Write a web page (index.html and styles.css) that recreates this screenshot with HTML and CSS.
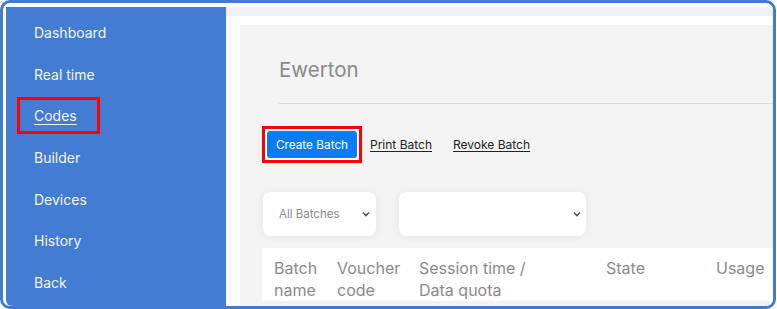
FILE: index.html
```html
<!DOCTYPE html>
<html lang="en">
<head>
  <meta charset="UTF-8">
  <meta name="viewport" content="width=device-width, initial-scale=1.0">
  <title>Codes</title>
  <link rel="stylesheet" href="styles.css">
</head>
<body>
  <div class="frame">
    <aside class="sidebar">
      <nav class="nav">
        <a class="nav-item" href="#">Dashboard</a>
        <a class="nav-item" href="#">Real time</a>
        <div class="nav-item"><a class="nav-link marked" href="#">Codes</a></div>
        <a class="nav-item" href="#">Builder</a>
        <a class="nav-item" href="#">Devices</a>
        <a class="nav-item" href="#">History</a>
        <a class="nav-item" href="#">Back</a>
      </nav>
    </aside>
    <main class="main">
      <div class="topbar"></div>
      <div class="content">
        <section class="panel">
          <div class="panel-head">
            <h1 class="title">Ewerton</h1>
          </div>
          <div class="actions">
            <span class="marked-box"><button class="btn" type="button">Create Batch</button></span>
            <a class="action-link first" href="#">Print Batch</a>
            <a class="action-link" href="#">Revoke Batch</a>
          </div>
          <div class="filters">
            <div class="select small">
              <span>All Batches</span>
              <svg width="8" height="6" viewBox="0 0 8 6"><path d="M1 1.5 L4 4.5 L7 1.5" fill="none" stroke="#555" stroke-width="1.6"/></svg>
            </div>
            <div class="select wide">
              <span></span>
              <svg width="8" height="6" viewBox="0 0 8 6"><path d="M1 1.5 L4 4.5 L7 1.5" fill="none" stroke="#555" stroke-width="1.6"/></svg>
            </div>
          </div>
          <div class="table">
            <div class="th">Batch<br>name</div>
            <div class="th">Voucher<br>code</div>
            <div class="th">Session time /<br>Data quota</div>
            <div class="th">State</div>
            <div class="th">Usage</div>
          </div>
        </section>
      </div>
    </main>
  </div>
</body>
</html>
```

FILE: styles.css
```css
body {
  margin: 0;
  font-family: Inter, "Noto Sans", sans-serif;
  background: #fff;
}
.frame {
  width: 776px;
  height: 309px;
  box-sizing: border-box;
  border: 3px solid #3f7ad3;
  border-radius: 10px;
  padding: 4px 0 0 3px;
  display: flex;
  overflow: hidden;
  background: #fff;
}
.sidebar {
  width: 220px;
  flex-shrink: 0;
  background: #437cd2;
  border-bottom-left-radius: 6px;
}
.nav {
  padding-top: 5px;
}
.nav-item {
  display: block;
  height: 41.7px;
  line-height: 41.7px;
  padding-left: 28px;
  color: #f2f6fc;
  font-size: 14px;
  text-decoration: none;
}
.nav-link {
  color: #f2f6fc;
}
.nav-link.marked {
  display: inline-block;
  margin-left: -17px;
  padding: 0 20px 0 14px;
  line-height: 31px;
  border: 3px solid #f00;
  text-decoration: underline;
  text-underline-offset: 3px;
}
.main {
  flex: 1;
  display: flex;
  flex-direction: column;
  min-width: 0;
}
.topbar {
  height: 9px;
  background: #eef0f3;
}
.content {
  flex: 1;
  padding: 9px 0 0 14px;
  display: flex;
}
.panel {
  flex: 1;
  background: #f3f3f3;
  padding-left: 22px;
}
.panel-head {
  margin-left: 17px;
  border-bottom: 1px solid #dadada;
  padding-top: 32px;
  height: 46px;
}
.title {
  margin: 0;
  font-size: 20.5px;
  line-height: 26px;
  font-weight: 400;
  color: #8a8a8a;
}
.actions {
  display: flex;
  align-items: center;
  margin-top: 22px;
}
.marked-box {
  display: inline-block;
  border: 3px solid #f00;
  padding: 2px;
  background: #fff;
  line-height: 0;
}
.btn {
  width: 90px;
  height: 27px;
  border: none;
  border-radius: 3px;
  background: #0b7cf8;
  color: #fff;
  font-family: inherit;
  font-size: 11.8px;
  padding: 0;
}
.action-link {
  margin-left: 21px;
  color: #222;
  font-size: 12px;
  text-decoration: underline;
  text-underline-offset: 2px;
}
.action-link.first {
  margin-left: 8px;
}
.filters {
  display: flex;
  gap: 23px;
  margin-top: 29px;
  padding-left: 1px;
}
.select {
  height: 44px;
  box-sizing: border-box;
  background: #fff;
  border-radius: 8px;
  box-shadow: 0 1px 8px rgba(0, 0, 0, 0.06);
  display: flex;
  align-items: center;
  justify-content: space-between;
  padding: 0 6px 0 16px;
  font-size: 11.5px;
  color: #8a8a8a;
}
.select.small {
  width: 113px;
}
.select.wide {
  width: 187px;
  padding-right: 5px;
}
.table {
  margin-top: 12px;
  background: #fff;
  display: grid;
  grid-template-columns: 63px 82px 187px 110px 1fr;
  padding: 9px 0 0 12px;
}
.th {
  font-size: 16px;
  line-height: 22px;
  color: #8a8a8a;
  white-space: nowrap;
}
```
